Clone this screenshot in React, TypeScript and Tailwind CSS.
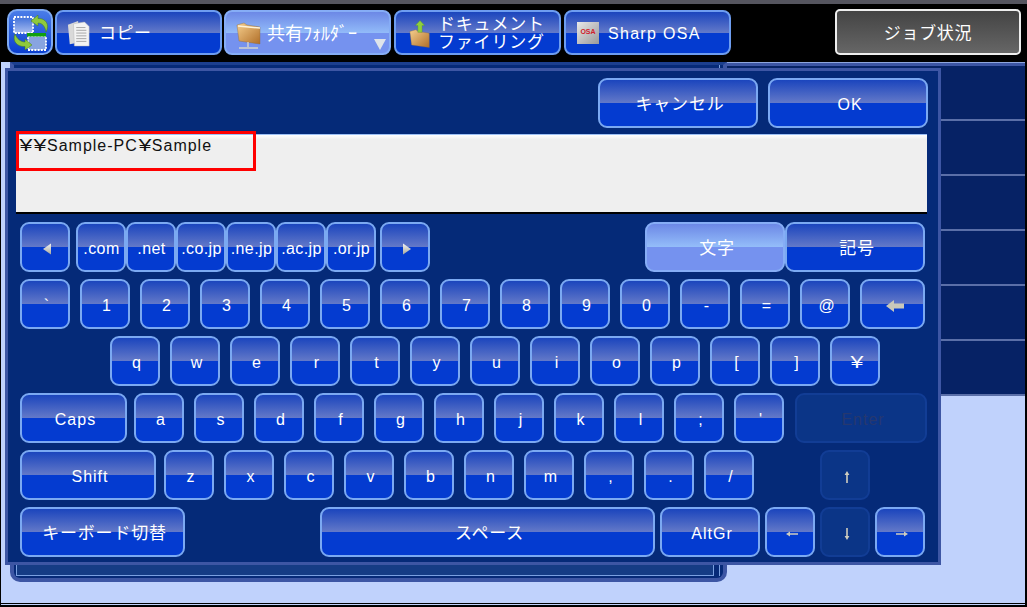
import type { ReactNode } from "react";

// Blue panel keys: split gloss, top half fades into a lighter band
const KEY_BLUE =
  "border-[#7ba9f2] bg-[linear-gradient(180deg,#1b45bd_0%,#6278c8_49%,#043bd0_49%,#043bd0_100%)] text-white";
const KEY_ACTIVE =
  "border-[#86adf6] bg-[linear-gradient(180deg,#6c88e6_0%,#93bcf9_49%,#7592ef_49%,#7592ef_100%)] text-white";
const KEY_OFF = "border-[#123d95] bg-[#0b3587] text-[#26386f]";

type KeyDef = { label?: ReactNode; cls?: string; off?: boolean; active?: boolean; jp?: boolean };

function Key({ label, cls = "w-[50px]", off, active, jp }: KeyDef) {
  return (
    <button
      className={`flex h-[50px] shrink-0 items-center justify-center rounded-[9px] border-2 pl-[4px] pt-[4px] ${
        jp ? "text-[17px] tracking-[0.8px]" : "text-[16px] tracking-[1px]"
      } ${off ? KEY_OFF : active ? KEY_ACTIVE : KEY_BLUE} ${cls}`}
    >
      {label}
    </button>
  );
}

function Tab({ children, active, cls = "w-[167px] h-[45px]" }: { children: ReactNode; active?: boolean; cls?: string }) {
  return (
    <button
      className={`relative flex shrink-0 items-center rounded-[8px] border-2 text-white ${
        active
          ? "border-[#86adf6] bg-[linear-gradient(180deg,#6c88e6_0%,#93bcf9_52%,#7592ef_52%,#7592ef_100%)]"
          : "border-[#6e9df0] bg-[linear-gradient(180deg,#1b45bd_0%,#6279c9_50%,#043bd0_50%,#043bd0_100%)]"
      } ${cls}`}
    >
      {children}
    </button>
  );
}

// The panel's yen sign is much wider than the one in the font
function Yen() {
  return <span className="inline-block w-[14px] scale-x-[1.45] text-center tracking-normal">¥</span>;
}

function Tri({ dir }: { dir: "l" | "r" }) {
  return (
    <svg width="12" height="14" viewBox="0 0 12 14">
      <defs>
        <linearGradient id={`tri${dir}`} x1="0" y1="0" x2="0" y2="1">
          <stop offset="0" stopColor="#f4f4f4" />
          <stop offset="1" stopColor="#a9a99c" />
        </linearGradient>
      </defs>
      <path d={dir === "l" ? "M10 1.5V12.5L2 7Z" : "M2 1.5V12.5L10 7Z"} fill={`url(#tri${dir})`} />
    </svg>
  );
}

function Arrow({ dir }: { dir: "u" | "d" | "l" | "r" }) {
  const rot = { u: 0, r: 90, d: 180, l: 270 }[dir];
  return (
    <svg width="16" height="16" viewBox="0 0 16 16">
      <g transform={`rotate(${rot} 8 8)`}>
        <path d="M8 2L5.6 6H7.2V14H8.8V6H10.4Z" fill="#cfcdbf" />
      </g>
    </svg>
  );
}

function BackArrow() {
  return (
    <svg width="20" height="16" viewBox="0 0 20 16">
      <path d="M1 8L9 2V5.5H19V10.5H9V14Z" fill="#c9c8ba" />
    </svg>
  );
}

function MenuIcon() {
  return (
    <svg width="42" height="42" viewBox="0 0 42 42" className="absolute left-0 top-0">
      <defs>
        <linearGradient id="frameA" x1="0" y1="0" x2="0" y2="1">
          <stop offset="0" stopColor="#3f6fd8" />
          <stop offset="1" stopColor="#a8bdf0" />
        </linearGradient>
      </defs>
      <rect x="5" y="6" width="19" height="16" fill="url(#frameA)" stroke="#fff" strokeDasharray="2 1.2" strokeWidth="1.8" />
      <rect x="19" y="25" width="18" height="14" fill="#88a4e0" stroke="#fff" strokeDasharray="2 1.2" strokeWidth="1.8" />
      <rect x="18" y="22" width="19" height="3.5" fill="#0fa00f" />
      <path d="M29 4L22 10L29 15V12C33 12 36 15 37 21C41 14 37 7 29 7.5Z" fill="#8fc93c" stroke="#3f7d1c" strokeWidth="0.5" />
      <path d="M16 39L23 34L16 28V31C12 31 8 28 6 23C3 30 8 36 16 35.5Z" fill="#8fc93c" stroke="#3f7d1c" strokeWidth="0.5" />
    </svg>
  );
}

function CopyIcon() {
  return (
    <svg width="24" height="28" viewBox="0 0 26 30">
      <path d="M1 5L12 1L14 24L3 26Z" fill="#d9d9d9" />
      <path d="M7 4L19 2L24 7V28L8 28Z" fill="#f3f3f3" stroke="#b5b5b5" strokeWidth="0.5" />
      <path d="M10 8H20M10 11H21M10 14H21M10 17H21M10 20H21M10 23H21" stroke="#8f8f8f" strokeWidth="0.8" />
    </svg>
  );
}

function FolderIcon({ id }: { id: string }) {
  return (
    <>
      <defs>
        <linearGradient id={id} x1="0" y1="0" x2="1" y2="1">
          <stop offset="0" stopColor="#f6cf8e" />
          <stop offset="1" stopColor="#b06e28" />
        </linearGradient>
      </defs>
      <path d="M1 5L8 3L11 5L24 7V24L3 21Z" fill={`url(#${id})`} stroke="#8d6a3c" strokeWidth="0.4" />
    </>
  );
}

function ShareFolderIcon() {
  return (
    <svg width="26" height="32" viewBox="0 0 26 32">
      <FolderIcon id="fold1" />
      <path d="M2 6L24 8" stroke="#fff3d8" strokeWidth="1.5" />
      <path d="M12 22V27M3 28H22" stroke="#d5d5cc" strokeWidth="1.4" />
    </svg>
  );
}

function FilingIcon() {
  return (
    <svg width="22" height="30" viewBox="0 0 26 34">
      <g transform="translate(0 9)">
        <FolderIcon id="fold2" />
      </g>
      <path d="M13 1L7.5 7H10.5V15H15.5V7H18.5Z" fill="#8fd03c" stroke="#4d8d2a" strokeWidth="0.4" />
    </svg>
  );
}

const row2 = ["1", "2", "3", "4", "5", "6", "7", "8", "9", "0", "-", "=", "@"];
const row3 = ["q", "w", "e", "r", "t", "y", "u", "i", "o", "p", "[", "]"];
const row4 = ["a", "s", "d", "f", "g", "h", "j", "k", "l", ";", "'"];
const row5 = ["z", "x", "c", "v", "b", "n", "m", ",", ".", "/"];
const domains = [".com", ".net", ".co.jp", ".ne.jp", ".ac.jp", ".or.jp"];

export default function App() {
  return (
    <div className="flex h-[607px] w-[1027px] flex-col overflow-hidden bg-black font-['Liberation_Sans','Noto_Sans_CJK_JP',sans-serif]">
      {/* Top menu bar */}
      <div className="h-[62px] shrink-0">
        <div className="h-[4px] bg-[#55555f]" />
        <div className="flex items-start pl-[7px] pt-[6px]">
          <button className="relative -mt-[1px] h-[46px] w-[46px] shrink-0 rounded-[10px] border-2 border-[#7faaf2] bg-[linear-gradient(180deg,#4a7de8,#0a3ed0)]">
            <MenuIcon />
          </button>
          <div className="ml-[2px]">
            <Tab>
              <span className="ml-[10px] mt-[2px]">
                <CopyIcon />
              </span>
              <span className="ml-[8px] pt-[3px] text-[17px] tracking-[0.5px]">コピー</span>
            </Tab>
          </div>
          <div className="ml-[2px]">
            <Tab active>
              <span className="ml-[10px] mt-[6px]">
                <ShareFolderIcon />
              </span>
              <span className="ml-[5px] pt-[3px] text-[18px]">共有ﾌｫﾙﾀﾞｰ</span>
              <span className="absolute bottom-[2px] right-[2px]">
                <svg width="14" height="14" viewBox="0 0 14 14">
                  <path d="M1 2H13L7 13Z" fill="#dfe4ea" />
                </svg>
              </span>
            </Tab>
          </div>
          <div className="ml-[3px]">
            <Tab>
              <span className="ml-[13px] mt-[2px]">
                <FilingIcon />
              </span>
              <span className="ml-[7px] pt-[2px] text-[17px] leading-[18px] tracking-[0.8px]">
                ドキュメント
                <br />
                ファイリング
              </span>
            </Tab>
          </div>
          <div className="ml-[3px]">
            <Tab>
              <span className="ml-[11px] flex h-[22px] w-[22px] items-center justify-center bg-[linear-gradient(135deg,#e8e8e8,#9a9a9a)] text-[7px] font-bold tracking-normal text-[#d0202a]">
                OSA
              </span>
              <span className="ml-[9px] pt-[2px] text-[16px] tracking-[1.3px]">Sharp OSA</span>
            </Tab>
          </div>
          <button className="ml-[104px] -mt-[1px] flex h-[46px] w-[186px] items-center justify-center rounded-[5px] border-2 border-[#eeeeee] bg-[linear-gradient(180deg,#444444,#666666)] pt-[3px] text-[17px] tracking-[0.7px] text-white">
            ジョブ状況
          </button>
        </div>
      </div>

      {/* Screen under the keyboard dialog */}
      <div className="relative ml-[1px] mr-[2px] h-[541px] shrink-0 bg-[#c0d2fc]">
        <div className="flex items-start">
          <div className="ml-[9px] h-[520px] w-[717px] shrink-0 rounded-b-[10px] border-x-[4px] border-b-[4px] border-t-[3px] border-[#3d56a4] border-t-[#1c3f8e] bg-[#062a78] pb-[2px] pl-[2px] pr-[3px]">
            <div className="flex h-full justify-end">
              <div className="flex flex-1 flex-col justify-end">
                <div className="h-[12px] border-x border-b border-[#7aa0e0] bg-[#153c85]" />
              </div>
              <div className="ml-[5px] w-[1px] bg-[#7aa0e0]" />
            </div>
          </div>
          <div className="flex-1 border-t border-[#8ea6de]">
            <div className="h-[3px] bg-[#3d56a4]" />
            <div className="h-[55px] border-b-2 border-[#5a6fa8] bg-[#062265]" />
            <div className="h-[55px] border-b-2 border-[#5a6fa8] bg-[#062265]" />
            <div className="h-[55px] border-b-2 border-[#5a6fa8] bg-[#062265]" />
            <div className="h-[55px] border-b-2 border-[#5a6fa8] bg-[#062265]" />
            <div className="h-[55px] border-b-2 border-[#5a6fa8] bg-[#062265]" />
            <div className="h-[55px] border-b-2 border-[#5a6fa8] bg-[#062265]" />
          </div>
        </div>

        {/* Keyboard dialog */}
        <div className="absolute left-[4px] top-[6px] h-[497px] w-[936px] border-[3px] border-[#3d56a4] bg-[#052a78]">
          <div className="flex justify-end gap-[10px] pr-[10px] pt-[7px]">
            <Key label="キャンセル" cls="w-[160px]" jp />
            <Key label="OK" cls="w-[160px]" />
          </div>

          <div className="relative ml-[8px] mt-[6px] h-[80px] w-[911px] border-b-2 border-t border-b-black border-t-[#9dc0f5] bg-[linear-gradient(180deg,#ffffff_0px,#efefef_5px)] text-[16px] tracking-[1px] text-[#111111]">
            <span className="absolute left-[3px] -top-[1px] whitespace-nowrap">
              <Yen />
              <Yen />
              Sample-PC
              <Yen />
              Sample
            </span>
            <div className="absolute -top-[4px] left-0 h-[40px] w-[240px] border-[3px] border-[#ff0000]" />
          </div>

          <div className="mt-[8px] flex pl-[12px]">
            <Key label={<Tri dir="l" />} />
            <div className="ml-[6px] flex">
              {domains.map((d) => (
                <Key key={d} label={d} cls="w-[50px] !pl-[1px] !tracking-[0.4px]" />
              ))}
            </div>
            <div className="ml-[4px]">
              <Key label={<Tri dir="r" />} />
            </div>
            <div className="ml-[215px] flex">
              <Key label="文字" cls="w-[140px]" active jp />
              <Key label="記号" cls="w-[140px]" jp />
            </div>
          </div>

          <div className="mt-[7px] flex gap-[10px] pl-[12px]">
            <Key label="`" />
            {row2.map((k) => (
              <Key key={k} label={k} />
            ))}
            <Key label={<BackArrow />} cls="w-[65px]" />
          </div>

          <div className="mt-[7px] flex gap-[10px] pl-[102px]">
            {row3.map((k) => (
              <Key key={k} label={k} />
            ))}
            <Key label={<Yen />} />
          </div>

          <div className="mt-[7px] flex pl-[12px]">
            <Key label="Caps" cls="w-[107px]" />
            <div className="ml-[7px] flex gap-[10px]">
              {row4.map((k) => (
                <Key key={k} label={k} />
              ))}
            </div>
            <div className="ml-[11px]">
              <Key label="Enter" cls="w-[132px]" off />
            </div>
          </div>

          <div className="mt-[7px] flex pl-[12px]">
            <Key label="Shift" cls="w-[136px]" />
            <div className="ml-[8px] flex gap-[10px]">
              {row5.map((k) => (
                <Key key={k} label={k} />
              ))}
            </div>
            <div className="ml-[66px]">
              <Key label={<Arrow dir="u" />} off />
            </div>
          </div>

          <div className="mt-[7px] flex pl-[12px]">
            <Key label="キーボード切替" cls="w-[165px]" jp />
            <div className="ml-[135px] flex gap-[5px]">
              <Key label="スペース" cls="w-[335px]" jp />
              <Key label="AltGr" cls="w-[100px]" />
              <Key label={<Arrow dir="l" />} />
              <Key label={<Arrow dir="d" />} off />
              <Key label={<Arrow dir="r" />} />
            </div>
          </div>
        </div>
      </div>

      {/* Bottom edge */}
      <div className="h-[1px] shrink-0 bg-black" />
      <div className="ml-[1px] mr-[2px] h-[1px] shrink-0 bg-[#c0d2fc]" />
    </div>
  );
}
